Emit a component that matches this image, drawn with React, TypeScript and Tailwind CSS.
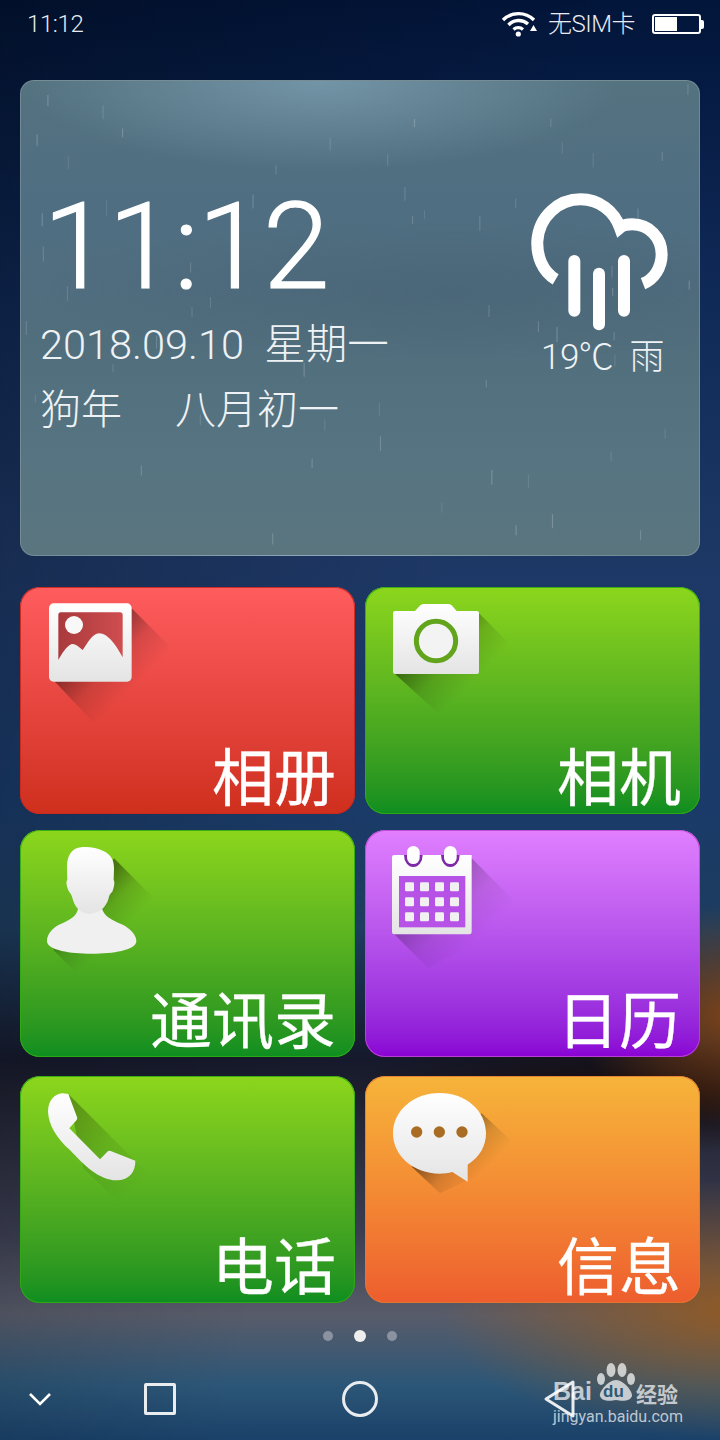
import React from "react";

const cjk = "font-['Roboto','Noto_Sans_CJK_SC',sans-serif]";

function Defs() {
  return (
    <svg className="absolute w-0 h-0" aria-hidden="true">
      <defs>
        <linearGradient id="white" x1="0" y1="0" x2="0" y2="1">
          <stop offset="0" stopColor="#ffffff" />
          <stop offset="1" stopColor="#e4e4e4" />
        </linearGradient>
        <linearGradient id="pwin" x1="0" y1="0" x2="1" y2="0">
          <stop offset="0" stopColor="#a93a3c" />
          <stop offset="1" stopColor="#cf4d4f" />
        </linearGradient>
      </defs>
    </svg>
  );
}

function Shadow({ id, points, from, to, o = 0.3 }: { id: string; points: string; from: [number, number]; to: [number, number]; o?: number }) {
  return (
    <>
      <defs>
        <linearGradient id={id} gradientUnits="userSpaceOnUse" x1={from[0]} y1={from[1]} x2={to[0]} y2={to[1]}>
          <stop offset="0" stopColor="#000" stopOpacity={o} />
          <stop offset="0.5" stopColor="#000" stopOpacity={o * 0.3} />
          <stop offset="1" stopColor="#000" stopOpacity="0" />
        </linearGradient>
      </defs>
      <polygon points={points} fill={`url(#${id})`} />
    </>
  );
}

function IconBox({ vy, children }: { vy: number; children: React.ReactNode }) {
  return (
    <svg className="block w-[200px] h-[160px] shrink-0 overflow-visible" viewBox={`0 ${vy} 600 480`}>
      {children}
    </svg>
  );
}

function PhotoIcon() {
  return (
    <IconBox vy={21}>
      <Shadow id="s1" points="335,85 480,230 250,460 100,300" from={[205, 205]} to={[330, 330]} o={0.42} />
      <rect x="87" y="70" width="248" height="235" rx="14" fill="url(#white)" />
      <path d="M115 105 Q115 97 123 97 L300 97 Q308 97 308 105 L308 232 C285 190 262 160 238 160 C215 160 200 195 188 210 C175 198 165 190 155 192 C140 198 125 222 115 240 Z" fill="url(#pwin)" />
      <circle cx="162" cy="135" r="27" fill="#f8f8f8" />
    </IconBox>
  );
}

function CameraIcon() {
  return (
    <IconBox vy={21}>
      <Shadow id="s2" points="342,100 480,238 220,400 90,282" from={[190, 190]} to={[315, 315]} o={0.42} />
      <path d="M90 93 L150 93 L166 76 Q170 72 178 72 L248 72 Q256 72 260 76 L275 93 L336 93 Q342 93 342 99 L342 276 Q342 282 336 282 L90 282 Q84 282 84 276 L84 99 Q84 93 90 93 Z" fill="url(#white)" />
      <circle cx="213" cy="183" r="59" fill="#f3f3f3" stroke="#62a51c" strokeWidth="15" />
    </IconBox>
  );
}

function PersonIcon() {
  return (
    <IconBox vy={15}>
      <Shadow id="s3" points="282,100 400,218 220,495 100,375" from={[205, 205]} to={[310, 310]} o={0.42} />
      <path d="M175 245 C172 275 150 283 120 298 C95 310 80 330 81 350 C85 375 150 386 215 386 C280 386 345 375 349 350 C350 330 330 310 305 298 C275 283 250 275 245 245 Z" fill="#f0f0f0" />
      <path d="M165 72 C185 62 225 65 250 78 C272 88 282 105 282 130 L281 165 C285 170 283 185 277 200 C272 205 268 208 266 220 C258 250 235 266 208 266 C185 266 165 250 158 222 C155 208 150 205 146 198 C140 185 137 170 142 165 L141 130 C140 100 150 80 165 72 Z" fill="url(#white)" />
    </IconBox>
  );
}

function CalendarIcon() {
  const xs = [120, 165, 210, 255];
  const ys = [172, 217, 262];
  return (
    <IconBox vy={15}>
      <Shadow id="s4" points="320,100 490,270 190,430 85,325" from={[205, 205]} to={[340, 340]} o={0.26} />
      <path d="M88 90 L320 90 L320 321 Q320 328 313 328 L88 328 Q81 328 81 321 L81 97 Q81 90 88 90 Z" fill="url(#white)" />
      <path d="M117 90 A28 36 0 0 0 173 90 Z" fill="#7e2aa8" />
      <path d="M228 90 A28 36 0 0 0 284 90 Z" fill="#7e2aa8" />
      <rect x="126" y="63" width="38" height="54" rx="19" fill="#ffffff" />
      <rect x="237" y="63" width="38" height="54" rx="19" fill="#ffffff" />
      <rect x="102" y="153" width="199" height="154" fill="#b752e6" />
      {ys.map((y) =>
        xs.map((x) => <rect key={`${x}-${y}`} x={x} y={y} width="27" height="27" rx="4" fill="#f1f1f1" />)
      )}
    </IconBox>
  );
}

function PhoneIcon() {
  return (
    <IconBox vy={18}>
      <Shadow id="s5" points="145,72 400,327 310,410 190,295" from={[130, 130]} to={[350, 350]} o={0.28} />
      <path d="M128 70 C100 72 84 95 84 125 C86 165 110 205 150 240 C190 282 235 331 290 331 C325 330 347 308 346 272 L272 243 Q266 241 262 245 L240 268 L148 175 L170 150 Q173 146 171 141 L145 72 Z" fill="url(#white)" />
    </IconBox>
  );
}

function BubbleIcon() {
  return (
    <IconBox vy={18}>
      <Shadow id="s6" points="350,130 480,250 225,370 140,290" from={[225, 225]} to={[330, 330]} o={0.42} />
      <path d="M224 69 C302 69 363 122 363 190 C363 226 345 262 308 284 L308 335 L262 306 C250 309 236 311 224 311 C146 311 84 258 84 190 C84 122 146 69 224 69 Z" fill="url(#white)" />
      {[155, 223, 291].map((x) => (
        <circle key={x} cx={x} cy="186" r="17" fill="#a96c22" />
      ))}
    </IconBox>
  );
}

function Tile({ cls, label, children }: { cls: string; label: string; children: React.ReactNode }) {
  return (
    <div className={`flex flex-col flex-1 h-[227px] rounded-[20px] ${cls}`}>
      {children}
      <div className="self-end -mt-[9px] pr-[19px] text-[62px] leading-[72px] text-white font-['Noto_Sans_CJK_SC',sans-serif] [-webkit-text-stroke:0.3px_white]">{label}</div>
    </div>
  );
}

const green = "bg-gradient-to-b from-[#8cd61c] to-[#0c8e20] shadow-[inset_0_0_0_1px_rgba(50,170,20,0.9)]";

function Rain() {
  const items: { x: number; y: number; l: number; o: number }[] = [];
  let s = 37;
  for (let i = 0; i < 60; i++) {
    s = (s * 9301 + 49297) % 233280;
    const x = (s / 233280) * 680;
    s = (s * 9301 + 49297) % 233280;
    const y = (s / 233280) * 470;
    s = (s * 9301 + 49297) % 233280;
    items.push({ x, y, l: 8 + (s % 8), o: 0.1 + ((s % 5) / 5) * 0.12 });
  }
  return (
    <svg className="absolute inset-0 w-full h-full" viewBox="0 0 680 476">
      {items.map((r, i) => (
        <line key={i} x1={r.x} y1={r.y} x2={r.x} y2={r.y + r.l} stroke="#fff" strokeOpacity={r.o} strokeWidth="1.2" />
      ))}
    </svg>
  );
}

export default function App() {
  return (
    <div className={`relative w-[720px] h-[1440px] overflow-hidden flex flex-col text-white ${cjk} bg-[radial-gradient(ellipse_160px_110px_at_735px_1015px,rgba(150,75,15,0.8),transparent),radial-gradient(ellipse_300px_130px_at_740px_1310px,rgba(150,90,30,0.9),transparent),radial-gradient(ellipse_300px_60px_at_640px_1095px,rgba(20,5,0,0.85),transparent),linear-gradient(105deg,rgba(0,0,0,0.28),rgba(0,0,0,0)_55%),linear-gradient(180deg,#02153a_0px,#102a58_300px,#1e3866_560px,#1a3b6a_800px,#1d3c5e_930px,#15192b_1060px,#1e2030_1090px,#3a3d50_1230px,#585c6a_1315px,#2c5677_1385px,#1a4169_1440px)]`}>
      <Defs />

      {/* status bar */}
      <div className="h-[48px] shrink-0 flex items-center pl-[27px] pr-[15px]">
        <span className="text-[24px] font-light tracking-[-0.4px] text-[#e8ebf0]">11:12</span>
        <svg className="ml-auto -translate-x-[3px]" width="36" height="26" viewBox="0 0 36 26">
          <path d="M2 9 A22 22 0 0 1 33 9" fill="none" stroke="#fff" strokeWidth="3.4" />
          <path d="M7.5 14 A14 14 0 0 1 27 13" fill="none" stroke="#fff" strokeWidth="3.4" />
          <path d="M12.5 18.5 A7 7 0 0 1 22 18.5" fill="none" stroke="#fff" strokeWidth="3.2" />
          <circle cx="17.3" cy="23" r="2.6" fill="#fff" />
          <polygon points="29,20 36,20 32.5,14" fill="#fff" />
        </svg>
        <span className="ml-[8px] mr-[3px] text-[24px] font-light tracking-[-0.5px] text-[#e8ebf0]">无SIM卡</span>
        <div className="ml-[15px] -translate-x-[1px] flex items-center">
          <div className="w-[49px] h-[20px] rounded-[3px] border-2 border-white p-[1px]">
            <div className="w-[22px] h-full bg-white" />
          </div>
          <div className="w-[3px] h-[9px] bg-white rounded-r-[2px]" />
        </div>
      </div>

      {/* clock widget */}
      <div className="relative mt-[32px] mx-[20px] h-[476px] shrink-0 rounded-[14px] overflow-hidden flex justify-between border border-[rgba(255,255,255,0.18)] bg-[radial-gradient(ellipse_300px_90px_at_300px_0px,rgba(125,160,180,0.75),transparent),radial-gradient(ellipse_420px_70px_at_430px_210px,rgba(60,85,105,0.3),transparent),linear-gradient(180deg,#54727f_0px,#4f6e82_120px,#516e7d_260px,#577482_380px,#5a757e_476px)]">
        <Rain />
        <div className="relative flex flex-col pl-[19px] pt-[106px]">
          <div className="ml-[3px] text-[120px] leading-[120px] font-light tracking-[-1.2px] [-webkit-text-stroke:1.2px_white]">11:12</div>
          <div className="mt-[13px] text-[41.5px] leading-[50px] font-light text-[#eef2f4] whitespace-pre">2018.09.10  星期一</div>
          <div className="mt-[15px] text-[41px] leading-[50px] font-light text-[#eef2f4] whitespace-pre">狗年<span className="ml-[53px]">八月初一</span></div>
        </div>
        <div className="relative w-[200px] flex flex-col pt-[90px]">
          <svg className="block w-[200px] h-[160px]" viewBox="0 0 600 480">
            <path d="M170 325 C130 302 113 255 115 210 C120 135 180 85 245 85 C300 85 345 120 363 170 C375 160 385 160 400 160 C450 160 488 200 488 250 C488 290 465 325 432 338" fill="none" stroke="#fff" strokeWidth="36" />
            <rect x="208" y="252" width="36" height="185" rx="18" fill="#fff" />
            <rect x="282" y="290" width="36" height="188" rx="18" fill="#fff" />
            <rect x="357" y="252" width="36" height="185" rx="18" fill="#fff" />
          </svg>
          <div className="mt-[5px] pl-[42px] text-[35px] leading-[44px] font-light whitespace-pre text-[#eef2f4] tracking-[-0.5px]">19℃  雨</div>
        </div>
      </div>

      {/* tiles */}
      <div className="mt-[31px] mx-[20px] flex flex-col">
        <div className="flex gap-[10px]">
          <Tile cls="bg-gradient-to-b from-[#ff5c5e] to-[#cf2f1c] shadow-[inset_0_0_0_1px_rgba(200,40,30,0.9)]" label="相册"><PhotoIcon /></Tile>
          <Tile cls={green} label="相机"><CameraIcon /></Tile>
        </div>
        <div className="flex gap-[10px] mt-[16px]">
          <Tile cls={green} label="通讯录"><PersonIcon /></Tile>
          <Tile cls="bg-gradient-to-b from-[#e17fff] to-[#8a00d4] shadow-[inset_0_0_0_1px_rgba(190,70,210,0.9)]" label="日历"><CalendarIcon /></Tile>
        </div>
        <div className="flex gap-[10px] mt-[19px]">
          <Tile cls={green} label="电话"><PhoneIcon /></Tile>
          <Tile cls="bg-gradient-to-b from-[#f6b43a] to-[#ed5d2e] shadow-[inset_0_0_0_1px_rgba(225,120,50,0.8)]" label="信息"><BubbleIcon /></Tile>
        </div>
      </div>

      {/* page dots */}
      <div className="mt-[27px] h-[12px] flex items-center justify-center gap-[21px]">
        <div className="w-[10px] h-[10px] rounded-full bg-[#8b93a0]" />
        <div className="w-[12px] h-[12px] rounded-full bg-[#eeeeee]" />
        <div className="w-[10px] h-[10px] rounded-full bg-[#8b93a0]" />
      </div>

      {/* nav bar */}
      <div className="mt-[37px] h-[40px] pl-[28px] flex items-center">
        <svg width="24" height="16" viewBox="0 0 24 16">
          <path d="M2 3 L12 13 L22 3" fill="none" stroke="#fff" strokeWidth="2.6" />
        </svg>
        <div className="ml-[92px] w-[32px] h-[32px] rounded-[2px] border-[3px] border-[#e9edf0]" />
        <div className="ml-[166px] w-[36px] h-[36px] rounded-full border-[3px] border-[#e9edf0]" />
        <svg className="ml-[165px]" width="34" height="40" viewBox="0 0 34 40">
          <path d="M30 3 L3 20 L30 37 Z" fill="none" stroke="#e9edf0" strokeWidth="3" strokeLinejoin="round" />
        </svg>
      </div>

      {/* watermark */}
      <div className="absolute left-[553px] top-[1360px] w-[130px] h-[66px] text-white/70">
        <div className="absolute left-0 top-[17px] text-[25px] leading-[28px] font-bold font-['Liberation_Sans',sans-serif]">Bai</div>
        <svg className="absolute left-[42px] top-[2px]" width="42" height="40" viewBox="0 0 42 40">
          <ellipse cx="6" cy="17" rx="4" ry="6" fill="currentColor" />
          <ellipse cx="16" cy="8" rx="4.5" ry="7" fill="currentColor" />
          <ellipse cx="27" cy="8" rx="4.5" ry="7" fill="currentColor" />
          <ellipse cx="36" cy="17" rx="4" ry="6" fill="currentColor" />
          <path d="M21 18 C13 18 4 30 5 34 C7 40 16 39 21 38 C26 39 35 40 37 34 C38 30 29 18 21 18 Z" fill="currentColor" />
        </svg>
        <div className="absolute left-[50px] top-[22px] text-[17px] leading-[20px] font-bold text-[#2f5874] font-['Liberation_Sans',sans-serif]">du</div>
        <div className="absolute left-[83px] top-[21px] text-[21px] leading-[24px] font-bold font-['Noto_Sans_CJK_SC',sans-serif]">经验</div>
        <div className="absolute left-0 top-[48px] text-[16px] leading-[18px] font-['Roboto',sans-serif]">jingyan.baidu.com</div>
      </div>
    </div>
  );
}
